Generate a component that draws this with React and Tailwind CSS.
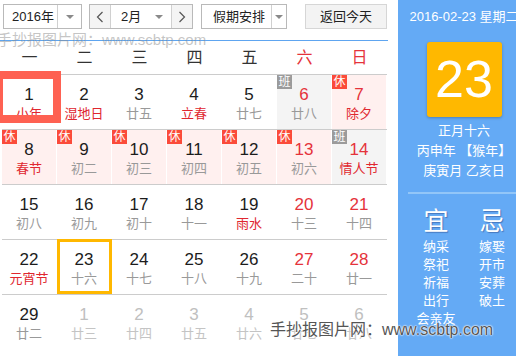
import React from "react";

const rows = [
  [
    { n: 1, l: "小年", lr: true, red: true, box: true },
    { n: 2, l: "湿地日", lr: true },
    { n: 3, l: "廿五" },
    { n: 4, l: "立春", lr: true },
    { n: 5, l: "廿七" },
    { n: 6, l: "廿八", r: true, b: "班" },
    { n: 7, l: "除夕", r: true, lr: true, b: "休" },
  ],
  [
    { n: 8, l: "春节", lr: true, b: "休" },
    { n: 9, l: "初二", b: "休" },
    { n: 10, l: "初三", b: "休" },
    { n: 11, l: "初四", b: "休" },
    { n: 12, l: "初五", b: "休" },
    { n: 13, l: "初六", r: true, b: "休" },
    { n: 14, l: "情人节", r: true, lr: true, b: "班" },
  ],
  [
    { n: 15, l: "初八" },
    { n: 16, l: "初九" },
    { n: 17, l: "初十" },
    { n: 18, l: "十一" },
    { n: 19, l: "雨水", lr: true },
    { n: 20, l: "十三", r: true },
    { n: 21, l: "十四", r: true },
  ],
  [
    { n: 22, l: "元宵节", lr: true },
    { n: 23, l: "十六", sel: true },
    { n: 24, l: "十七" },
    { n: 25, l: "十八" },
    { n: 26, l: "十九" },
    { n: 27, l: "二十", r: true },
    { n: 28, l: "廿一", r: true },
  ],
  [
    { n: 29, l: "廿二" },
    { n: 1, l: "廿三", f: true },
    { n: 2, l: "廿四", f: true },
    { n: 3, l: "廿五", f: true },
    { n: 4, l: "廿六", f: true },
    { n: 5, l: "廿七", f: true },
    { n: 6, l: "廿八", f: true },
  ],
];

function Tri() {
  return (
    <div className="w-0 h-0 border-l-[4px] border-r-[4px] border-t-[4px] border-l-transparent border-r-transparent border-t-[#8a8a8a]" />
  );
}

function Chev({ dir }) {
  return (
    <svg width="8" height="12" viewBox="0 0 8 12">
      <path
        d={dir === "l" ? "M6.5 1 L1.5 6 L6.5 11" : "M1.5 1 L6.5 6 L1.5 11"}
        stroke="#555"
        strokeWidth="1.2"
        fill="none"
      />
    </svg>
  );
}

function Cell({ c }) {
  let bg = "bg-white";
  if (c.b === "休") bg = "bg-[#fff0ef]";
  if (c.b === "班") bg = "bg-[#f4f4f4]";
  let nc = "text-[#1c1c1c]";
  if (c.r) nc = "text-[#e5333b]";
  if (c.f) nc = "text-[#c0c0c0]";
  let lc = "text-[#999999]";
  if (c.lr) lc = "text-[#e0272f]";
  if (c.f) lc = "text-[#c4c4c4]";
  return (
    <div className={`relative h-[54px] border-r border-white ${bg}`}>
      {c.b && (
        <div
          className={`absolute left-0 top-0 w-[15px] h-[14px] text-white text-[12px] leading-[14px] text-center ${
            c.b === "休" ? "bg-[#fb4b3a]" : "bg-[#9b9b9b]"
          }`}
        >
          {c.b}
        </div>
      )}
      {c.box && (
        <div className="absolute left-[-7px] top-[-4px] w-[66px] h-[52px] border-[8px] border-[#fe6152] z-10" />
      )}
      {c.sel && (
        <div className="absolute left-0 top-[-1px] w-[55px] h-[55px] border-[3px] border-[#ffb800] z-10" />
      )}
      <div className="flex flex-col items-center pt-[10px]">
        <div className={`text-[17px] leading-[20px] ${nc}`}>{c.n}</div>
        <div className={`text-[13px] leading-[16px] mt-[1px] ${lc}`}>{c.l}</div>
      </div>
    </div>
  );
}

export default function App() {
  const week = ["一", "二", "三", "四", "五", "六", "日"];
  return (
    <div className="relative w-[516px] h-[356px] overflow-hidden bg-white flex font-['Liberation_Sans','Noto_Sans_CJK_SC',sans-serif]">
      <div className="w-[398px] shrink-0 relative">
        {/* header */}
        <div className="w-[388px] h-[41px] border-b border-[#5ea5f0] flex items-start pt-[4px] pl-[3px] text-[13px] text-[#222]">
          <div className="w-[79px] h-[25px] border border-[#b9b9b9] flex items-center">
            <div className="w-[53px] pl-[8px]">2016年</div>
            <div className="flex-1 h-full border-l border-[#d0d0d0] flex items-center justify-center">
              <Tri />
            </div>
          </div>
          <div className="ml-[7px] w-[104px] h-[25px] border border-[#b9b9b9] flex items-center">
            <div className="w-[21px] h-full bg-[#f4f4f4] border-r border-[#d0d0d0] flex items-center justify-center">
              <Chev dir="l" />
            </div>
            <div className="w-[60px] h-full flex items-center pl-[10px]">
              <span className="w-[34px]">2月</span>
              <Tri />
            </div>
            <div className="flex-1 h-full bg-[#f4f4f4] border-l border-[#d0d0d0] flex items-center justify-center">
              <Chev dir="r" />
            </div>
          </div>
          <div className="ml-[8px] w-[86px] h-[25px] border border-[#b9b9b9] flex items-center">
            <div className="w-[69px] pl-[11px]">假期安排</div>
            <div className="flex-1 h-full border-l border-[#d0d0d0] flex items-center justify-center">
              <Tri />
            </div>
          </div>
          <div className="ml-[18px] w-[82px] h-[25px] border border-[#d6d6d6] bg-[#f3f3f3] flex items-center justify-center">
            返回今天
          </div>
        </div>
        {/* week header */}
        <div className="ml-[2px] h-[33px] grid grid-cols-[repeat(7,55px)] items-center text-[16px]">
          {week.map((w, i) => (
            <div key={w} className={`text-center ${i >= 5 ? "text-[#e5333b]" : "text-[#333]"}`}>
              {w}
            </div>
          ))}
        </div>
        {/* rows */}
        <div className="ml-[2px] w-[385px]">
          {rows.map((r, i) => (
            <div key={i} className="border-t border-[#cccccc] grid grid-cols-[repeat(7,55px)]">
              {r.map((c, j) => (
                <Cell key={j} c={c} />
              ))}
            </div>
          ))}
        </div>
        {/* top watermark */}
        <div className="absolute left-[-3px] top-[31px] text-[15px] leading-[17px] text-[rgba(140,140,140,0.5)] whitespace-nowrap">
          手抄报图片网：www.scbtp.com
        </div>
      </div>
      {/* right panel */}
      <div className="w-[132px] shrink-0 bg-[#64aaf5] text-white flex flex-col items-center">
        <div className="pt-[9px] text-[13px] leading-[16px] whitespace-nowrap">2016-02-23 星期二</div>
        <div className="mt-[17px] w-[75px] h-[75px] bg-[#ffb800] rounded-[3px] shadow-[0_1px_3px_rgba(0,0,0,0.25)] flex items-center justify-center text-[52px] leading-[75px]">
          23
        </div>
        <div className="mt-[4px] text-[13px] leading-[20px] text-center whitespace-nowrap">
          <div>正月十六</div>
          <div>丙申年 【猴年】</div>
          <div>庚寅月 乙亥日</div>
        </div>
        <div className="mt-[11px] self-stretch mx-[10px] h-[2px] bg-[#92c6f8]" />
        <div className="self-stretch mx-[10px] flex mt-[13px]">
          <div className="flex-1 flex flex-col items-center">
            <div className="text-[25px] leading-[28px] [text-shadow:1px_1px_1px_rgba(0,0,60,0.3)]">宜</div>
            <div className="mt-[3px] text-[13px] leading-[18px] text-center">
              <div>纳采</div>
              <div>祭祀</div>
              <div>祈福</div>
              <div>出行</div>
              <div>会亲友</div>
            </div>
          </div>
          <div className="flex-1 flex flex-col items-center">
            <div className="text-[25px] leading-[28px] [text-shadow:1px_1px_1px_rgba(0,0,60,0.3)]">忌</div>
            <div className="mt-[3px] text-[13px] leading-[18px] text-center">
              <div>嫁娶</div>
              <div>开市</div>
              <div>安葬</div>
              <div>破土</div>
            </div>
          </div>
        </div>
      </div>
      {/* bottom watermark */}
      <div className="absolute left-[270px] top-[321px] text-[16px] leading-[18px] text-[#555] whitespace-nowrap z-20 [text-shadow:0_0_2px_#fff,0_0_2px_#fff,0_0_1px_#fff]">
        手抄报图片网：www.scbtp.com
      </div>
    </div>
  );
}
